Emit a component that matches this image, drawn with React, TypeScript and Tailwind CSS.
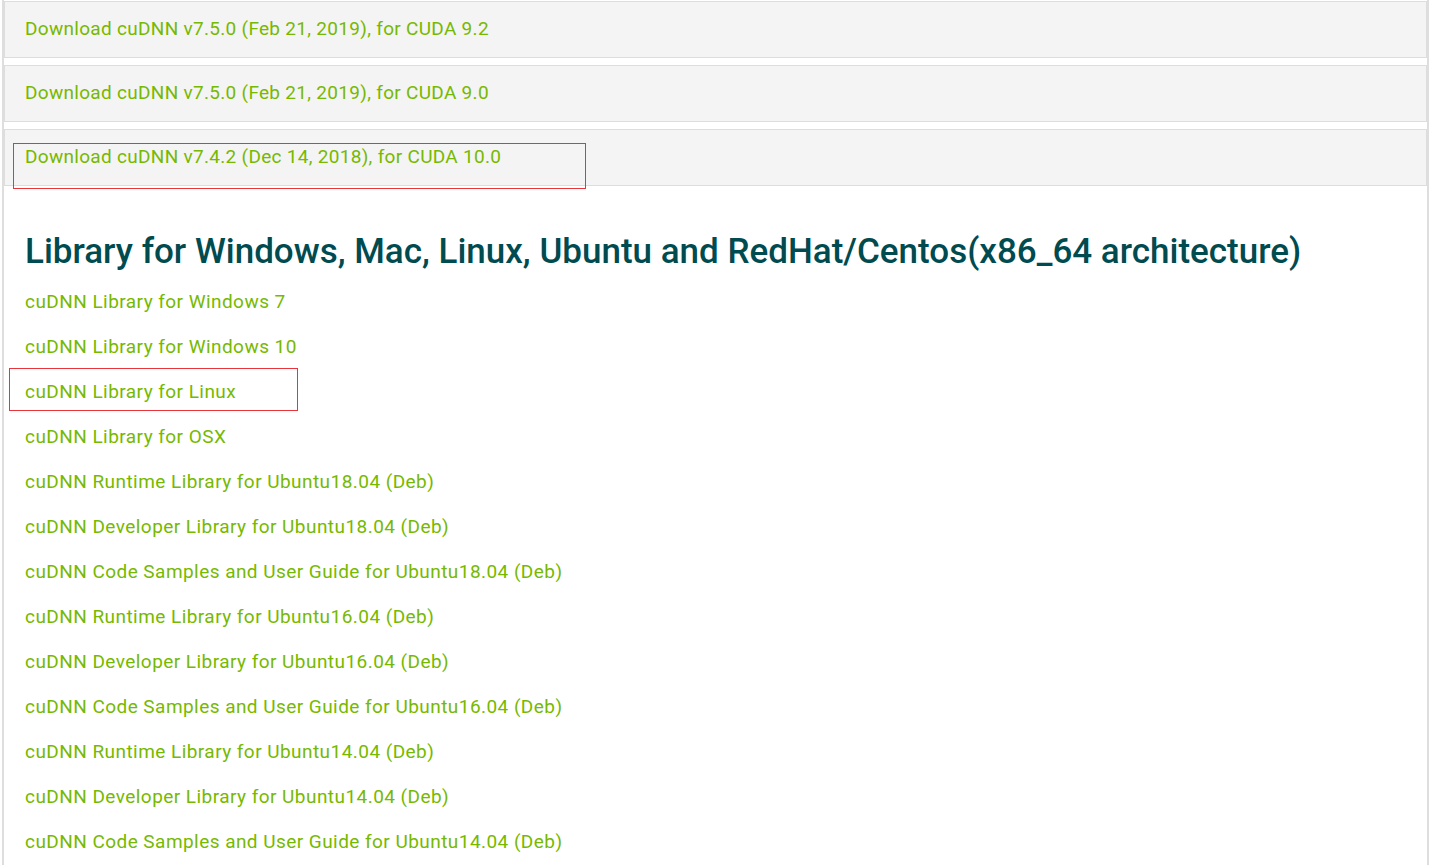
const downloads = [
  'Download cuDNN v7.5.0 (Feb 21, 2019), for CUDA 9.2',
  'Download cuDNN v7.5.0 (Feb 21, 2019), for CUDA 9.0',
  'Download cuDNN v7.4.2 (Dec 14, 2018), for CUDA 10.0',
];

const libraries = [
  'cuDNN Library for Windows 7',
  'cuDNN Library for Windows 10',
  'cuDNN Library for Linux',
  'cuDNN Library for OSX',
  'cuDNN Runtime Library for Ubuntu18.04 (Deb)',
  'cuDNN Developer Library for Ubuntu18.04 (Deb)',
  'cuDNN Code Samples and User Guide for Ubuntu18.04 (Deb)',
  'cuDNN Runtime Library for Ubuntu16.04 (Deb)',
  'cuDNN Developer Library for Ubuntu16.04 (Deb)',
  'cuDNN Code Samples and User Guide for Ubuntu16.04 (Deb)',
  'cuDNN Runtime Library for Ubuntu14.04 (Deb)',
  'cuDNN Developer Library for Ubuntu14.04 (Deb)',
  'cuDNN Code Samples and User Guide for Ubuntu14.04 (Deb)',
];

export default function App() {
  return (
    <div className="relative h-[865px] w-[1446px] overflow-hidden bg-white font-['Roboto',sans-serif]">
      <div className="ml-[2px] h-full w-[1427px] border-x-2 border-[#dedede] pt-px">
        {downloads.map((label) => (
          <div
            key={label}
            className="mb-[7px] h-[57px] border border-[#dddddd] bg-[#f4f4f4] pl-5 pt-[16px]"
          >
            <a href="#" className="text-[19px] leading-[20px] tracking-[0.3px] text-[#76b900]">
              {label}
            </a>
          </div>
        ))}

        <div className="px-[21px] pt-[39px]">
          <h2 className="text-[35px] font-medium leading-[40px] text-[#004b50]">
            Library for Windows, Mac, Linux, Ubuntu and RedHat/Centos(x86_64 architecture)
          </h2>
          <ul className="mt-[7px]">
            {libraries.map((label) => (
              <li key={label} className="h-[45px] leading-[45px]">
                <a href="#" className="text-[19px] tracking-[0.45px] text-[#76b900]">
                  {label}
                </a>
              </li>
            ))}
          </ul>
        </div>
      </div>

      {/* red annotation boxes */}
      <div className="absolute left-[13px] top-[143px] h-[46px] w-[573px] border border-[#e8353b]" />
      <div className="absolute left-[9px] top-[368px] h-[43px] w-[289px] border border-[#e8353b]" />
    </div>
  );
}
